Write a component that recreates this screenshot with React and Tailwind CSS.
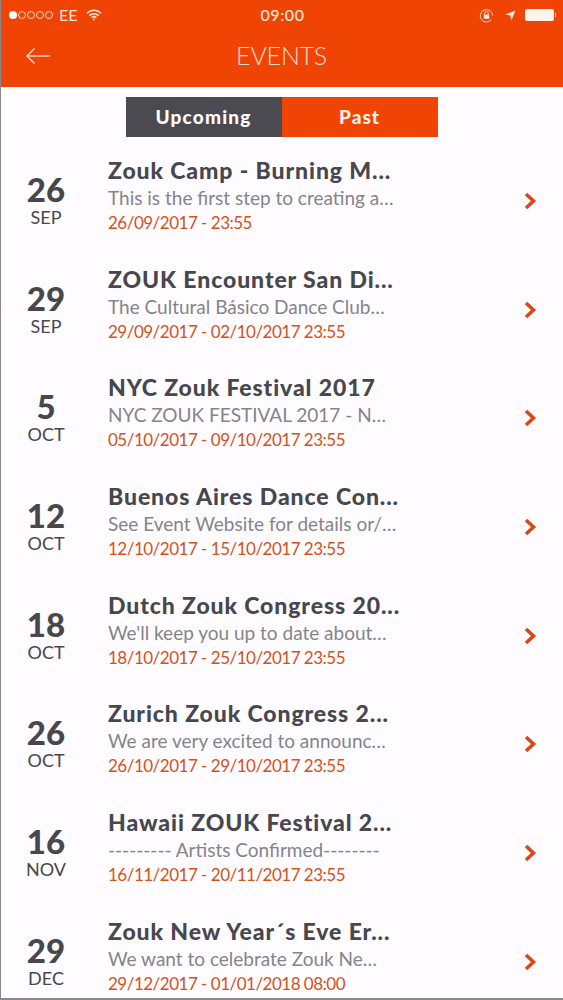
import React from 'react';

const events = [
  { day: '26', month: 'SEP', title: 'Zouk Camp - Burning M...', desc: 'This is the first step to creating a…', date: '26/09/2017 - 23:55' },
  { day: '29', month: 'SEP', title: 'ZOUK Encounter San Di...', desc: 'The Cultural Básico Dance Club…', date: '29/09/2017 - 02/10/2017 23:55' },
  { day: '5', month: 'OCT', title: 'NYC Zouk Festival 2017', desc: 'NYC ZOUK FESTIVAL 2017 - N…', date: '05/10/2017 - 09/10/2017 23:55' },
  { day: '12', month: 'OCT', title: 'Buenos Aires Dance Con...', desc: 'See Event Website for details or/…', date: '12/10/2017 - 15/10/2017 23:55' },
  { day: '18', month: 'OCT', title: 'Dutch Zouk Congress 20...', desc: "We'll keep you up to date about…", date: '18/10/2017 - 25/10/2017 23:55' },
  { day: '26', month: 'OCT', title: 'Zurich Zouk Congress 2...', desc: 'We are very excited to announc…', date: '26/10/2017 - 29/10/2017 23:55' },
  { day: '16', month: 'NOV', title: 'Hawaii ZOUK Festival 2...', desc: '--------- Artists Confirmed--------', date: '16/11/2017 - 20/11/2017 23:55' },
  { day: '29', month: 'DEC', title: 'Zouk New Year´s Eve Er...', desc: 'We want to celebrate Zouk Ne…', date: '29/12/2017 - 01/01/2018 08:00' },
];

function StatusBar() {
  return (
    <div className="h-[30px] flex items-center pl-[9px] pr-[7px] text-[#ffe9dc]">
      <div className="flex-1 flex items-center">
        <div className="flex gap-[1px]">
          <span className="w-[8px] h-[8px] rounded-full bg-white" />
          {[0, 1, 2, 3].map(i => (
            <span key={i} className="w-[8px] h-[8px] rounded-full border border-[#ffd9c4]" />
          ))}
        </div>
        <span className="ml-[6px] text-[16px] leading-none">EE</span>
        <svg className="ml-[9px]" width="16" height="12" viewBox="0 0 16 12" fill="none" stroke="currentColor" strokeWidth="1.5">
          <path d="M1 4.2a10 10 0 0 1 14 0" />
          <path d="M3.4 6.6a6.6 6.6 0 0 1 9.2 0" />
          <path d="M5.6 8.8a3.4 3.4 0 0 1 4.8 0" />
          <circle cx="8" cy="10.4" r="0.9" fill="currentColor" stroke="none" />
        </svg>
      </div>
      <span className="text-[16px] tracking-[0.6px] leading-none font-medium">09:00</span>
      <div className="flex-1 flex items-center justify-end">
        <svg width="15" height="15" viewBox="0 0 15 15" fill="none" stroke="currentColor">
          <path d="M12.4 11.5A6.2 6.2 0 1 1 13.6 7.5" strokeWidth="0.9" />
          <rect x="4.8" y="6.6" width="5.4" height="4.2" fill="currentColor" stroke="none" />
          <path d="M5.7 6.6V5.4a1.8 1.8 0 0 1 3.6 0v1.2" strokeWidth="1" />
        </svg>
        <svg className="ml-[11px]" width="11" height="11" viewBox="0 0 11 11" fill="currentColor">
          <path d="M10.5 0.5 L0.5 4.6 L5.4 5.6 L6.4 10.5 Z" />
        </svg>
        <div className="ml-[9px] w-[29px] h-[12px] rounded-[2px] bg-[#fff4ec]" />
        <div className="ml-[1px] w-[1px] h-[4px] bg-[#ffe9dc]" />
      </div>
    </div>
  );
}

function EventRow({ ev }) {
  return (
    <div className="h-[108.7px] flex items-start">
      <div className="w-[92px] shrink-0 flex flex-col items-center pt-[27px]">
        <span className="text-[33px] leading-[33px] font-black text-[#47474d]">{ev.day}</span>
        <span className="text-[18px] leading-[20px] text-[#47474d] mt-[1px]">{ev.month}</span>
      </div>
      <div className="ml-[16px] flex-1 min-w-0 pt-[11px]">
        <div className="text-[23px] leading-[26px] font-black tracking-[0.9px] text-[#47474d] whitespace-nowrap">{ev.title}</div>
        <div className="text-[19px] leading-[24px] mt-[3px] text-[#84848a] whitespace-nowrap">{ev.desc}</div>
        <div className="text-[17px] leading-[22px] mt-[2px] tracking-[-0.5px] text-[#d4511c] whitespace-nowrap">{ev.date}</div>
      </div>
      <svg className="mt-[46px] mr-[26px] shrink-0" width="14" height="18" viewBox="0 0 14 18" fill="none" stroke="#d9481a" strokeWidth="3.6">
        <path d="M3 2 L10.5 9 L3 16" />
      </svg>
    </div>
  );
}

export default function App() {
  return (
    <div className="w-[563px] h-[1000px] overflow-hidden bg-[#fefcfe] border-l border-b-2 border-[#8a8a8e]" style={{ fontFamily: 'Lato, sans-serif' }}>
      <div className="-ml-[1px] h-[87px] bg-[#ef4404]">
        <StatusBar />
        <div className="grid grid-cols-[1fr_auto_1fr] items-center h-[52px] text-[#ffdcc8]">
          <div className="pl-[25px]">
            <svg className="block" width="26" height="18" viewBox="0 0 26 18" fill="none" stroke="currentColor" strokeWidth="1.4">
              <path d="M25 9 H2" />
              <path d="M9.5 1.5 L2 9 L9.5 16.5" />
            </svg>
          </div>
          <span className="text-[25px] font-light tracking-[-0.2px]">EVENTS</span>
          <div />
        </div>
      </div>
      <div className="flex justify-center mt-[10px] -ml-[1px]">
        <div className="w-[156px] h-[40px] flex items-center justify-center bg-[#4a4a50] text-white text-[19px] font-black tracking-[1.2px]">Upcoming</div>
        <div className="w-[156px] h-[40px] flex items-center justify-center bg-[#ef4404] text-[#fff1e8] text-[19px] font-black tracking-[1px]">Past</div>
      </div>
      <div className="mt-[9px] -ml-[1px]">
        {events.map((ev, i) => <EventRow key={i} ev={ev} />)}
      </div>
    </div>
  );
}
